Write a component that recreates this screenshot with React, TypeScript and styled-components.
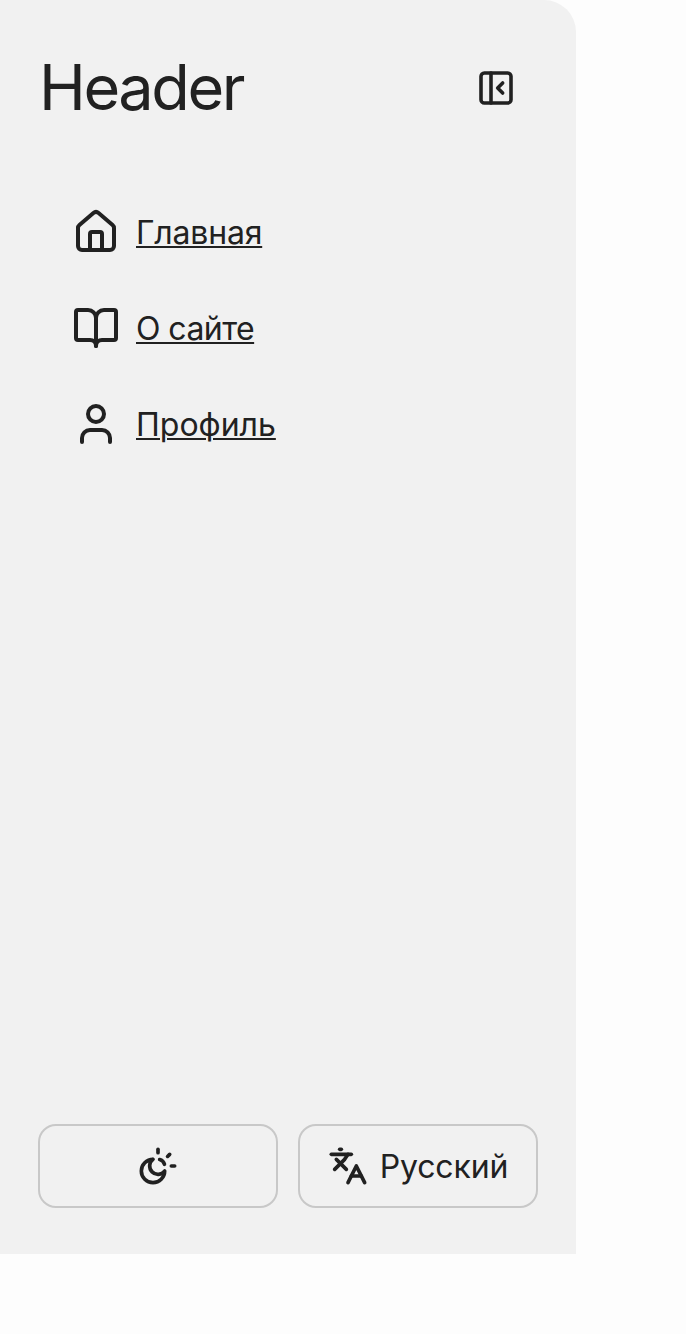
import React from "react";
import styled, { createGlobalStyle } from "styled-components";
import { BookOpen, House, Languages, PanelLeftClose, User } from "lucide-react";

const GlobalStyle = createGlobalStyle`
  *, *::before, *::after { box-sizing: border-box; }
  body {
    margin: 0;
    background: #fdfdfd;
    color: #212121;
    font-family: Inter, "Liberation Sans", sans-serif;
    font-size: 32px;
    line-height: 48px;
    -webkit-font-smoothing: antialiased;
  }
`;

const Sidebar = styled.aside`
  display: flex;
  flex-direction: column;
  width: 576px;
  height: 1254px;
  padding: 40px 38px 46px;
  background: #f1f1f1;
  border-top-right-radius: 32px;
`;

const Header = styled.header`
  display: flex;
  align-items: center;
  justify-content: space-between;
  height: 96px;
  padding: 0 22px 0 1px;
`;

const Title = styled.h1`
  margin: 0;
  padding-bottom: 2px;
  font-size: 63px;
  font-weight: 400;
  line-height: 94px;
  letter-spacing: -2.4px;
`;

const IconButton = styled.button`
  display: flex;
  padding: 0;
  border: 0;
  background: none;
  color: inherit;
`;

const Nav = styled.nav`
  display: flex;
  flex-direction: column;
  gap: 48px;
  flex: 1;
  padding: 72px 34px 0;
`;

const NavItem = styled.div`
  display: flex;
  align-items: center;
  gap: 16px;
  height: 48px;
`;

const NavLink = styled.a<{ $tracking: number }>`
  padding-top: 2px;
  color: inherit;
  letter-spacing: ${(p) => p.$tracking}px;
  text-decoration: underline;
  text-decoration-thickness: 2px;
  text-underline-offset: 2px;
`;

const Footer = styled.footer`
  display: flex;
  gap: 20px;
`;

const SettingButton = styled.button`
  display: flex;
  flex: 1;
  align-items: center;
  justify-content: center;
  gap: 12px;
  height: 84px;
  padding: 0;
  border: 2px solid #c8c8c8;
  border-radius: 18px;
  background: none;
  color: inherit;
  font: inherit;
`;

const ButtonLabel = styled.span`
  padding-top: 2px;
  letter-spacing: -0.12px;
`;

const SunMoonIcon = ({ size }: { size: number }) => (
  <svg
    width={size}
    height={size}
    viewBox="0 0 24 24"
    fill="none"
    stroke="currentColor"
    strokeWidth="2.2"
    strokeLinecap="round"
    strokeLinejoin="round"
  >
    <path d="M12 2v2" />
    <path d="M13 8.129A4 4 0 0 1 15.873 11" />
    <path d="m19 5-1.256 1.256" />
    <path d="M20 12h2" />
    <path d="M9 8a5 5 0 1 0 7 7 7 7 0 1 1-7-7" />
  </svg>
);

const links = [
  { label: "Главная", Icon: House, tracking: -0.2 },
  { label: "О сайте", Icon: BookOpen, tracking: -0.55 },
  { label: "Профиль", Icon: User, tracking: 0 },
];

export default function App() {
  return (
    <>
      <GlobalStyle />
      <Sidebar>
        <Header>
          <Title>Header</Title>
          <IconButton aria-label="Свернуть">
            <PanelLeftClose size={40} strokeWidth={2.15} />
          </IconButton>
        </Header>
        <Nav>
          {links.map(({ label, Icon, tracking }) => (
            <NavItem key={label}>
              <Icon size={48} />
              <NavLink href="#" $tracking={tracking}>
                {label}
              </NavLink>
            </NavItem>
          ))}
        </Nav>
        <Footer>
          <SettingButton aria-label="Тема">
            <SunMoonIcon size={40} />
          </SettingButton>
          <SettingButton>
            <Languages size={40} strokeWidth={2.2} />
            <ButtonLabel>Русский</ButtonLabel>
          </SettingButton>
        </Footer>
      </Sidebar>
    </>
  );
}
